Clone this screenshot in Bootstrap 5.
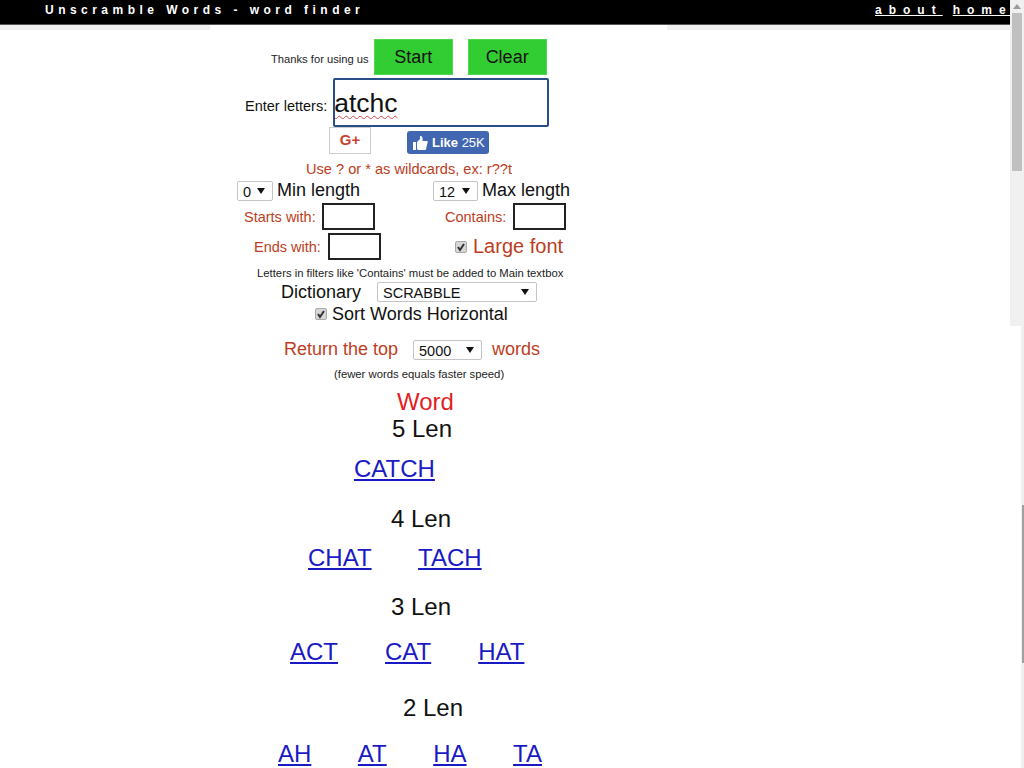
<!DOCTYPE html>
<html lang="en">
<head>
    <meta charset="UTF-8">
    <title>Unscramble Words - word finder</title>
    <link href="https://cdn.jsdelivr.net/npm/bootstrap@5.3.0/dist/css/bootstrap.min.css" rel="stylesheet">
    <style>
        html, body { height: 100%; overflow: hidden; }
        body { font-family: "Liberation Sans", Arial, sans-serif; color: #111; background: #fff; }
        .top-bar { height: 25px; background: #000; border-bottom: 1px solid #555; padding: 0 0 0 45px; color: #fff; font-size: 12px; font-weight: 700; letter-spacing: 4.47px; line-height: 20px; white-space: nowrap; }
        .top-links { width: 136px; margin-right: 13px; gap: 10px; letter-spacing: 7px; }
        .top-links a { color: #fff; }
        .top-strip { height: 5px; background: #f0f0f0; }
        .top-strip-gap { width: 457px; margin-left: 210px; height: 5px; background: #fff; }
        .form-col { padding-left: 210px; }
        .tx-red { color: #bd3d22; }
        .tx-m { font-size: 14.5px; }
        .tx-l { font-size: 18px; }
        .go-btn { width: 79px; height: 36px; background: #32cd32; color: #111; border: 1px solid #4fd84f; border-radius: 0; font-size: 18px; padding: 0; }
        .thanks-txt { font-size: 11.2px; margin: 4px 5px 0 0; color: #222; }
        .enter-txt { font-size: 14.5px; margin: 8px 6px 0 0; }
        .letters { width: 216px; height: 49px; border: 2px solid #2a4f86; border-radius: 2px; font-size: 26.5px; padding: 2px 0 0 0; text-indent: -1px; color: #111; text-decoration: underline wavy #d9434e 1px; text-underline-offset: 3px; outline: 0; }
        .g-plus { width: 42px; height: 27px; border: 1px solid #ccc; color: #c9402f; font-weight: 700; font-size: 15px; line-height: 24px; text-align: center; background: #fff; }
        .fb-like { width: 82px; height: 23px; background: #4267b2; color: #fff; border-radius: 3px; font-size: 13px; line-height: 22px; gap: 4px; padding-left: 6px; }
        .fb-like b { font-weight: 700; }
        .pick { appearance: none; height: 20px; border: 1px solid #c4c4c4; border-radius: 2px; background: #fff url("data:image/svg+xml,%3Csvg xmlns='http://www.w3.org/2000/svg' width='8' height='6'%3E%3Cpath d='M0 0h8L4 6z' fill='%23111'/%3E%3C/svg%3E") no-repeat right 7px center; font-size: 14.5px; padding: 0 0 2px 5px; color: #111; outline: 0; font-family: inherit; }
        .pick-0 { width: 36px; }
        .pick-12 { width: 45px; }
        .pick-top { width: 69px; }
        .pick-dict { width: 160px; }
        .box { width: 53px; height: 27px; border: 2px solid #222; border-radius: 0; background: #fff; outline: 0; }
        .tick { appearance: none; width: 12px; height: 12px; margin: 0; border-radius: 2px; border: 1px solid #aaa; background: #d6d6d6 url("data:image/svg+xml,%3Csvg xmlns='http://www.w3.org/2000/svg' width='10' height='10'%3E%3Cpath d='M2 5l2 3 4-6' fill='none' stroke='%23333' stroke-width='2'/%3E%3C/svg%3E") no-repeat center; }
        .row-thanks { padding-left: 61px; height: 36px; margin-top: 9px; }
        .btn-gap { margin-left: 15px; }
        .row-enter { padding-left: 35px; height: 49px; margin-top: 3px; }
        .row-social { height: 27px; padding-left: 119px; gap: 36px; }
        .row-wild { padding-left: 96px; height: 20px; margin-top: 5px; line-height: 20px; font-size: 14.6px; }
        .row-len { padding-left: 27px; height: 21px; margin-top: 1px; }
        .len-a { width: 196px; }
        .len-txt { margin-left: 4px; }
        .row-starts { padding-left: 34px; height: 27px; margin-top: 2px; }
        .starts-a { width: 201px; }
        .lbl-starts { width: 78px; padding-top: 2px; flex-shrink: 0; }
        .lbl-contains { width: 68px; padding-top: 2px; }
        .row-ends { padding-left: 44px; height: 27px; margin-top: 3px; }
        .ends-a { width: 201px; }
        .lbl-ends { width: 74px; padding-top: 2px; flex-shrink: 0; }
        .large-txt { font-size: 20px; margin: -2px 0 0 6px; }
        .hint { padding-left: 47px; height: 16px; line-height: 16px; margin-top: 5px; font-size: 11.3px; color: #222; }
        .row-dict { padding-left: 71px; height: 24px; margin-top: -1px; }
        .lbl-dict { width: 96px; }
        .row-sort { padding-left: 105px; height: 20px; font-size: 18px; gap: 5px; }
        .row-top { padding-left: 74px; height: 22px; margin-top: 15px; }
        .lbl-top { width: 129px; margin-top: -2px; }
        .lbl-words { margin: -2px 0 0 10px; }
        .speed { padding-left: 124px; height: 14px; line-height: 14px; margin-top: 6px; font-size: 11.3px; color: #222; }
        .head-word { padding-left: 187px; font-size: 24px; color: #e21f26; line-height: 27px; margin-top: 7px; }
        .head-len { font-size: 24px; line-height: 28px; color: #111; }
        .len-5 { padding-left: 182px; }
        .len-4 { padding-left: 181px; margin-top: 22px; }
        .len-3 { padding-left: 181px; margin-top: 21px; }
        .len-2 { padding-left: 193px; margin-top: 28px; }
        .word-row { font-size: 24px; line-height: 28px; gap: 46.5px; }
        .word-row a { color: #1a1ac4; }
        .words-5 { padding-left: 144px; margin-top: 12px; }
        .words-4 { padding-left: 98px; margin-top: 11px; }
        .words-3 { padding-left: 80px; margin-top: 17px; gap: 47px; }
        .words-2 { padding-left: 68px; margin-top: 18px; }
        .scroll-wide { position: absolute; top: 0; right: 0; width: 14px; height: 326px; background: #f0f0f0; }
        .scroll-wide i { position: absolute; left: 2px; top: 13px; width: 10px; height: 158px; background: #c0c0c0; }
        .scroll-arrow { position: absolute; left: 3px; top: 4px; border: 4px solid transparent; border-top: 0; border-bottom: 5px solid #9a9a9a; }
        .scroll-thin { position: absolute; top: 326px; right: 0; width: 3px; height: 442px; background: #f0f0f0; }
        .scroll-thin i { position: absolute; left: 1px; top: 179px; width: 2px; height: 158px; background: #a0a0a0; }
    </style>
</head>
<body>
    <div class="top-bar d-flex justify-content-between">
        <span>Unscramble Words - word finder</span>
        <span class="top-links d-flex"><a href="#">about</a><a href="#">home</a></span>
    </div>
    <div class="top-strip"><div class="top-strip-gap"></div></div>

    <div class="form-col">
        <div class="row-thanks d-flex align-items-center">
            <span class="thanks-txt">Thanks for using us</span>
            <button class="go-btn">Start</button>
            <button class="go-btn btn-gap">Clear</button>
        </div>
        <div class="row-enter d-flex align-items-center">
            <label class="enter-txt" for="letters">Enter letters:</label>
            <input class="letters" id="letters" value="atchc">
        </div>
        <div class="row-social d-flex align-items-end">
            <div class="g-plus">G+</div>
            <div class="fb-like d-flex align-items-center">
                <svg width="15" height="14" viewBox="0 0 15 14"><path d="M0 6h3v8H0zM4 6l3-3V0c2 0 3 1 2.500 5H14c1 0 1 1 .5 2L13 13c0 .6-.5 1-1 1H6c-1 0-2-.5-2-1z" fill="#fff"/></svg>
                <span><b>Like</b> 25K</span>
            </div>
        </div>
        <div class="row-wild tx-red">Use ? or * as wildcards, ex: r??t</div>
        <div class="row-len d-flex align-items-center tx-l">
            <div class="len-a d-flex align-items-center">
                <select class="pick pick-0"><option>0</option></select><span class="len-txt">Min length</span>
            </div>
            <div class="d-flex align-items-center">
                <select class="pick pick-12"><option>12</option></select><span class="len-txt">Max length</span>
            </div>
        </div>
        <div class="row-starts d-flex align-items-center tx-red tx-m">
            <div class="starts-a d-flex align-items-center">
                <span class="lbl-starts">Starts with:</span><input class="box">
            </div>
            <div class="d-flex align-items-center">
                <span class="lbl-contains">Contains:</span><input class="box">
            </div>
        </div>
        <div class="row-ends d-flex align-items-center tx-red tx-m">
            <div class="ends-a d-flex align-items-center">
                <span class="lbl-ends">Ends with:</span><input class="box">
            </div>
            <div class="d-flex align-items-center">
                <input type="checkbox" class="tick" checked><span class="large-txt">Large font</span>
            </div>
        </div>
        <div class="hint">Letters in filters like 'Contains' must be added to Main textbox</div>
        <div class="row-dict d-flex align-items-center tx-l">
            <span class="lbl-dict">Dictionary</span>
            <select class="pick pick-dict"><option>SCRABBLE</option></select>
        </div>
        <div class="row-sort d-flex align-items-center">
            <input type="checkbox" class="tick" checked><span>Sort Words Horizontal</span>
        </div>
        <div class="row-top d-flex align-items-center tx-l tx-red">
            <span class="lbl-top">Return the top</span>
            <select class="pick pick-top"><option>5000</option></select>
            <span class="lbl-words">words</span>
        </div>
        <div class="speed">(fewer words equals faster speed)</div>
        <div class="head-word">Word</div>
        <div class="head-len len-5">5 Len</div>
        <div class="word-row d-flex words-5"><a href="#">CATCH</a></div>
        <div class="head-len len-4">4 Len</div>
        <div class="word-row d-flex words-4"><a href="#">CHAT</a><a href="#">TACH</a></div>
        <div class="head-len len-3">3 Len</div>
        <div class="word-row d-flex words-3"><a href="#">ACT</a><a href="#">CAT</a><a href="#">HAT</a></div>
        <div class="head-len len-2">2 Len</div>
        <div class="word-row d-flex words-2"><a href="#">AH</a><a href="#">AT</a><a href="#">HA</a><a href="#">TA</a></div>
    </div>

    <div class="scroll-wide"><span class="scroll-arrow"></span><i></i></div>
    <div class="scroll-thin"><i></i></div>
</body>
</html>
